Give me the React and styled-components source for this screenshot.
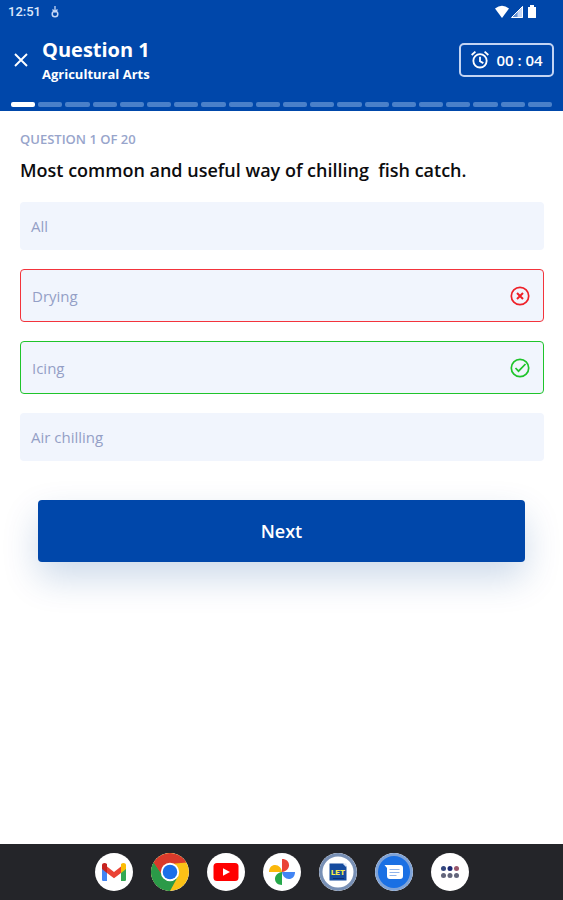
import React from "react";
import styled, { createGlobalStyle, css } from "styled-components";

const GlobalStyle = createGlobalStyle`
  * { box-sizing: border-box; }
  body { margin: 0; background: #fff; }
  button { font: inherit; cursor: pointer; }
  h1, h2, p { margin: 0; }
`;

const Screen = styled.div`
  display: flex;
  flex-direction: column;
  min-height: 100vh;
  background: #fff;
  font-family: "Open Sans", "Noto Sans", sans-serif;
`;

const Header = styled.header`
  background: #0047aa;
  color: #fff;
  padding-bottom: 4px;
`;

const StatusBar = styled.div`
  display: flex;
  align-items: center;
  justify-content: space-between;
  height: 24px;
  padding: 0 24px 0 8px;
  font: 500 13px/24px Roboto, sans-serif;
  color: #dce7fa;
`;

const StatusGroup = styled.div`
  display: flex;
  align-items: center;
  gap: ${(p) => p.$gap}px;
`;

const TitleBar = styled.div`
  display: flex;
  align-items: center;
  height: 72px;
  padding: 0 9px 0 12px;
`;

const CloseButton = styled.button`
  display: flex;
  padding: 0;
  border: 0;
  background: none;
  color: #fff;
`;

const Titles = styled.div`
  flex: 1;
  min-width: 0;
  margin-left: 12px;
`;

const Title = styled.h1`
  font-size: 20px;
  line-height: 28px;
  font-weight: 700;
`;

const Subject = styled.p`
  font-size: 13px;
  line-height: 20px;
  font-weight: 700;
`;

const Timer = styled.div`
  display: flex;
  align-items: center;
  justify-content: center;
  gap: 6px;
  width: 95px;
  height: 34px;
  border: 2px solid #c3d4f3;
  border-radius: 5px;
  font-size: 15px;
  line-height: 20px;
  font-weight: 600;
  white-space: pre;
`;

const Progress = styled.div`
  display: flex;
  gap: 3px;
  padding: 6px 11px 0;
`;

const Step = styled.span`
  flex: 1;
  height: 5px;
  border-radius: 2px;
  background: ${(p) => (p.$active ? "#fff" : "#4a80c9")};
`;

const Main = styled.main`
  flex: 1;
  padding: 18px 19px 24px 20px;
`;

const Counter = styled.p`
  font-size: 13px;
  line-height: 20px;
  font-weight: 600;
  color: #98a5cb;
`;

const Prompt = styled.h2`
  margin-top: 9px;
  font-size: 18px;
  line-height: 24px;
  font-weight: 600;
  color: #0c0c0e;
  white-space: pre-wrap;
`;

const Options = styled.div`
  display: grid;
  gap: 19px;
  margin-top: 20px;
`;

const optionMarks = {
  wrong: css`
    height: 53px;
    border: 1px solid #f3343c;
  `,
  right: css`
    height: 53px;
    border: 1px solid #1fc42b;
  `,
};

const Option = styled.button`
  display: flex;
  align-items: center;
  justify-content: space-between;
  width: 100%;
  height: 48px;
  padding: 0 13px 0 11px;
  border: 0;
  border-radius: 4px;
  background: #f1f5fd;
  color: #949fc6;
  font-size: 15px;
  line-height: 20px;
  text-align: left;
  ${(p) => optionMarks[p.$mark]}
`;

const NextButton = styled.button`
  display: block;
  width: calc(100% - 37px);
  height: 62px;
  margin: 39px 19px 0 18px;
  border: 0;
  border-radius: 4px;
  background: #0047aa;
  color: #fff;
  font-size: 18px;
  line-height: 24px;
  font-weight: 600;
  box-shadow: 0 16px 36px rgba(0, 71, 150, 0.2);
`;

const Dock = styled.nav`
  display: flex;
  align-items: center;
  justify-content: center;
  gap: 18px;
  height: 56px;
  background: #242529;
`;

const AppButton = styled.button`
  display: flex;
  width: 38px;
  height: 38px;
  padding: 0;
  border: 0;
  border-radius: 50%;
  background: #fff;
  overflow: hidden;
`;

const Icon = ({ size = 38, box = 38, children }) => (
  <svg width={size} height={size} viewBox={`0 0 ${box} ${box}`} fill="none" aria-hidden="true">
    {children}
  </svg>
);

const dockApps = [
  {
    name: "Gmail",
    art: (
      <>
        <path d="M7 13v14q0 1 1.200 1H12V16z" fill="#4285f4" />
        <path d="M31 13v14q0 1-1.200 1H26V16z" fill="#34a853" />
        <path d="M12 13.500l7 5.500 7-5.500v6.500l-7 5.300-7-5.300z" fill="#ea4335" />
        <path d="M7 14v-1.500c0-2.700 3-3 5-1.500v9l-5-4z" fill="#c5221f" />
        <path d="M31 14v-1.500c0-2.700-3-3-5-1.500v9l5-4z" fill="#fbbc04" />
      </>
    ),
  },
  {
    name: "Chrome",
    art: (
      <>
        <circle cx="19" cy="19" r="19" fill="#fbc116" />
        <path d="M2.550 9.500A19 19 0 0 1 35.450 9.500L19 11 12 23z" fill="#d93a2b" />
        <path d="M2.550 9.500A19 19 0 0 0 19 38L27.200 23 12.200 23z" fill="#2b9a48" />
        <path d="M2.550 9.500H19v5l-6.500 9.500z" fill="#d93a2b" />
        <path d="M2.550 9.500L11 23l8 4v11A19 19 0 0 1 2.550 9.500z" fill="#2b9a48" />
        <circle cx="19" cy="19" r="9.200" fill="#fff" />
        <circle cx="19" cy="19" r="7.300" fill="#1a6fe8" />
      </>
    ),
  },
  {
    name: "YouTube",
    art: (
      <>
        <rect x="6.500" y="10" width="25" height="18" rx="3.500" fill="#f00" />
        <path d="M16 15.200v7.600l7-3.800z" fill="#fff" />
      </>
    ),
  },
  {
    name: "Photos",
    art: (
      <>
        <path d="M19 6c4.500 0 7 2.700 7 6.200s-3 6.300-7 6.800z" fill="#ea4335" />
        <path d="M32 19c0 4.500-2.700 7-6.200 7S19.500 23 19 19z" fill="#4285f4" />
        <path d="M19 32c-4.500 0-7-2.700-7-6.200s3-6.300 7-6.800z" fill="#25a84a" />
        <path d="M6 19c0-4.500 2.700-7 6.200-7s6.300 3 6.800 7z" fill="#fbb80b" />
      </>
    ),
  },
  {
    name: "LET Reviewer",
    art: (
      <>
        <circle cx="19" cy="19" r="19" fill="#7890b5" />
        <circle cx="19" cy="19" r="15.500" fill="#fff" />
        <path d="M10.500 10.500h14l3 3v14h-17z" fill="#154b9e" />
        <path d="M23.500 10.500h4v4z" fill="#d8e4f5" />
        <path d="M14 25.500h11" stroke="#0b2f75" strokeWidth="1" />
        <text x="19" y="21.500" textAnchor="middle" fontFamily="Roboto, sans-serif" fontSize="8" fontWeight="900" fill="#f4e94b">LET</text>
      </>
    ),
  },
  {
    name: "Messages",
    art: (
      <>
        <circle cx="19" cy="19" r="19" fill="#7ea3d8" />
        <circle cx="19" cy="19" r="16" fill="#1a70e4" />
        <path d="M9.500 12H25q3 0 3 3v8q0 3-3 3H15q-3 0-3-3v-8z" fill="#fff" />
        <path d="M14.500 16.500h10M14.500 19.500h10M14.500 22.500h7" stroke="#8fb4ec" strokeWidth="1.200" />
      </>
    ),
  },
  {
    name: "All apps",
    art: (
      <>
        <circle cx="12.500" cy="15.500" r="2.500" fill="#33477f" />
        <circle cx="19" cy="15.500" r="2.500" fill="#192875" />
        <circle cx="25.500" cy="15.500" r="2.500" fill="#99576c" />
        <circle cx="12.500" cy="22.500" r="2.500" fill="#62657b" />
        <circle cx="19" cy="22.500" r="2.500" fill="#62657b" />
        <circle cx="25.500" cy="22.500" r="2.500" fill="#62657b" />
      </>
    ),
  },
];

const markIcons = {
  wrong: (
    <Icon size={20} box={20}>
      <circle cx="10" cy="10" r="8.700" stroke="#ee2028" strokeWidth="1.700" />
      <path d="M7 7l6 6M13 7l-6 6" stroke="#ee2028" strokeWidth="2" />
    </Icon>
  ),
  right: (
    <Icon size={20} box={20}>
      <circle cx="10" cy="10" r="8.700" stroke="#1fc42b" strokeWidth="1.700" />
      <path d="M5.500 10l3 3.200L15.500 6" stroke="#1fc42b" strokeWidth="1.700" />
    </Icon>
  ),
};

const options = [
  { label: "All" },
  { label: "Drying", mark: "wrong" },
  { label: "Icing", mark: "right" },
  { label: "Air chilling" },
];

const steps = Array.from({ length: 20 }, (_, i) => i);

export default function App() {
  return (
    <Screen>
      <GlobalStyle />
      <Header>
        <StatusBar>
          <StatusGroup $gap={7}>
            <span>12:51</span>
            <Icon size={14} box={14}>
              <path d="M7 1v6M4.500 4.500L7 7l2.500-2.500" stroke="#c5d7f6" strokeWidth="1.300" />
              <circle cx="7" cy="9" r="2.800" stroke="#c5d7f6" strokeWidth="1.500" />
            </Icon>
          </StatusGroup>
          <StatusGroup $gap={1}>
            <Icon size={14} box={14}>
              <path d="M0 3.500Q7-2 14 3.500L7 13z" fill="#fff" />
            </Icon>
            <Icon size={14} box={14}>
              <path d="M1.500 12.500L13 1v11.500z" fill="#6593d5" />
              <path d="M7.500 7L13 1v11.500H7.500z" fill="#c5d7f6" />
              <path d="M1.500 12.500L12.500 1.500v11z" stroke="#fff" strokeWidth="1" />
            </Icon>
            <Icon size={14} box={14}>
              <path d="M5 0h4v2h2v10.500q0 .500-.500.500h-7q-.500 0-.500-.500V2h2z" fill="#fff" />
            </Icon>
          </StatusGroup>
        </StatusBar>
        <TitleBar>
          <CloseButton aria-label="Close">
            <Icon size={18} box={18}>
              <path d="M3 3l12 12M15 3L3 15" stroke="currentColor" strokeWidth="1.900" />
            </Icon>
          </CloseButton>
          <Titles>
            <Title>Question 1</Title>
            <Subject>Agricultural Arts</Subject>
          </Titles>
          <Timer role="timer">
            <Icon size={20} box={24}>
              <circle cx="12" cy="13" r="8" stroke="#fff" strokeWidth="2.200" />
              <path d="M12 8v5.500l4 2.300M2 6l4.500-4M22 6l-4.500-4" stroke="#fff" strokeWidth="2.200" />
            </Icon>
            <span>00 : 04</span>
          </Timer>
        </TitleBar>
        <Progress role="progressbar" aria-label="Quiz progress" aria-valuenow={1} aria-valuemin={0} aria-valuemax={20}>
          {steps.map((i) => (
            <Step key={i} $active={i === 0} />
          ))}
        </Progress>
      </Header>
      <Main>
        <Counter>QUESTION 1 OF 20</Counter>
        <Prompt>{"Most common and useful way of chilling  fish catch."}</Prompt>
        <Options>
          {options.map((o) => (
            <Option key={o.label} $mark={o.mark}>
              {o.label}
              {markIcons[o.mark]}
            </Option>
          ))}
        </Options>
        <NextButton>Next</NextButton>
      </Main>
      <Dock aria-label="Apps">
        {dockApps.map((app) => (
          <AppButton key={app.name} aria-label={app.name}>
            <Icon>{app.art}</Icon>
          </AppButton>
        ))}
      </Dock>
    </Screen>
  );
}
